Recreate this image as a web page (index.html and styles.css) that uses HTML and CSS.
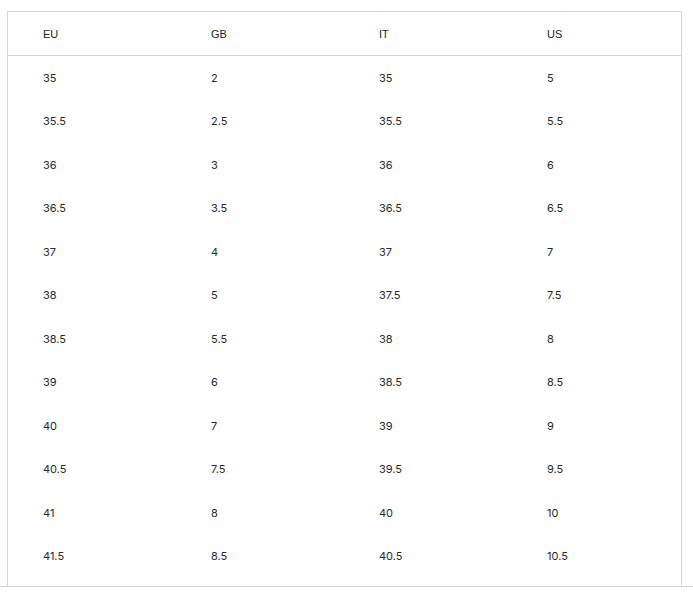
FILE: index.html
```html
<!DOCTYPE html>
<html>
<head>
<meta charset="utf-8">
<link rel="stylesheet" href="styles.css">
</head>
<body>
<div class="chart">
  <div class="row head">
    <div class="cell">EU</div><div class="cell">GB</div><div class="cell">IT</div><div class="cell">US</div>
  </div>
  <div class="body">
    <div class="row"><div class="cell">35</div><div class="cell">2</div><div class="cell">35</div><div class="cell">5</div></div>
    <div class="row"><div class="cell">35.5</div><div class="cell">2.5</div><div class="cell">35.5</div><div class="cell">5.5</div></div>
    <div class="row"><div class="cell">36</div><div class="cell">3</div><div class="cell">36</div><div class="cell">6</div></div>
    <div class="row"><div class="cell">36.5</div><div class="cell">3.5</div><div class="cell">36.5</div><div class="cell">6.5</div></div>
    <div class="row"><div class="cell">37</div><div class="cell">4</div><div class="cell">37</div><div class="cell">7</div></div>
    <div class="row"><div class="cell">38</div><div class="cell">5</div><div class="cell">37.5</div><div class="cell">7.5</div></div>
    <div class="row"><div class="cell">38.5</div><div class="cell">5.5</div><div class="cell">38</div><div class="cell">8</div></div>
    <div class="row"><div class="cell">39</div><div class="cell">6</div><div class="cell">38.5</div><div class="cell">8.5</div></div>
    <div class="row"><div class="cell">40</div><div class="cell">7</div><div class="cell">39</div><div class="cell">9</div></div>
    <div class="row"><div class="cell">40.5</div><div class="cell">7.5</div><div class="cell">39.5</div><div class="cell">9.5</div></div>
    <div class="row"><div class="cell">41</div><div class="cell">8</div><div class="cell">40</div><div class="cell">10</div></div>
    <div class="row"><div class="cell">41.5</div><div class="cell">8.5</div><div class="cell">40.5</div><div class="cell">10.5</div></div>
  </div>
</div>
<div class="rule"></div>
</body>
</html>
```
FILE: styles.css
```css
html, body {
  margin: 0;
  padding: 0;
  background: #fff;
}
body {
  padding-top: 11px;
  font-family: "Inter", "Liberation Sans", sans-serif;
  color: #2a2a2a;
}
.chart {
  margin-left: 7px;
  width: 673px;
  border: 1px solid #d6d6d6;
  border-bottom: none;
}
.row {
  display: grid;
  grid-template-columns: repeat(4, 168px);
  height: 43.5px;
  align-items: center;
}
.head {
  height: 43px;
  border-bottom: 1px solid #d6d6d6;
}
.head .cell {
  font-family: "Liberation Sans", Arial, sans-serif;
  font-size: 11px;
  color: #222;
}
.body {
  padding-bottom: 8px;
}
.cell {
  padding-left: 35px;
  font-size: 11px;
  line-height: 14px;
}
.rule {
  height: 1px;
  background: #d6d6d6;
  width: 100%;
}
```
